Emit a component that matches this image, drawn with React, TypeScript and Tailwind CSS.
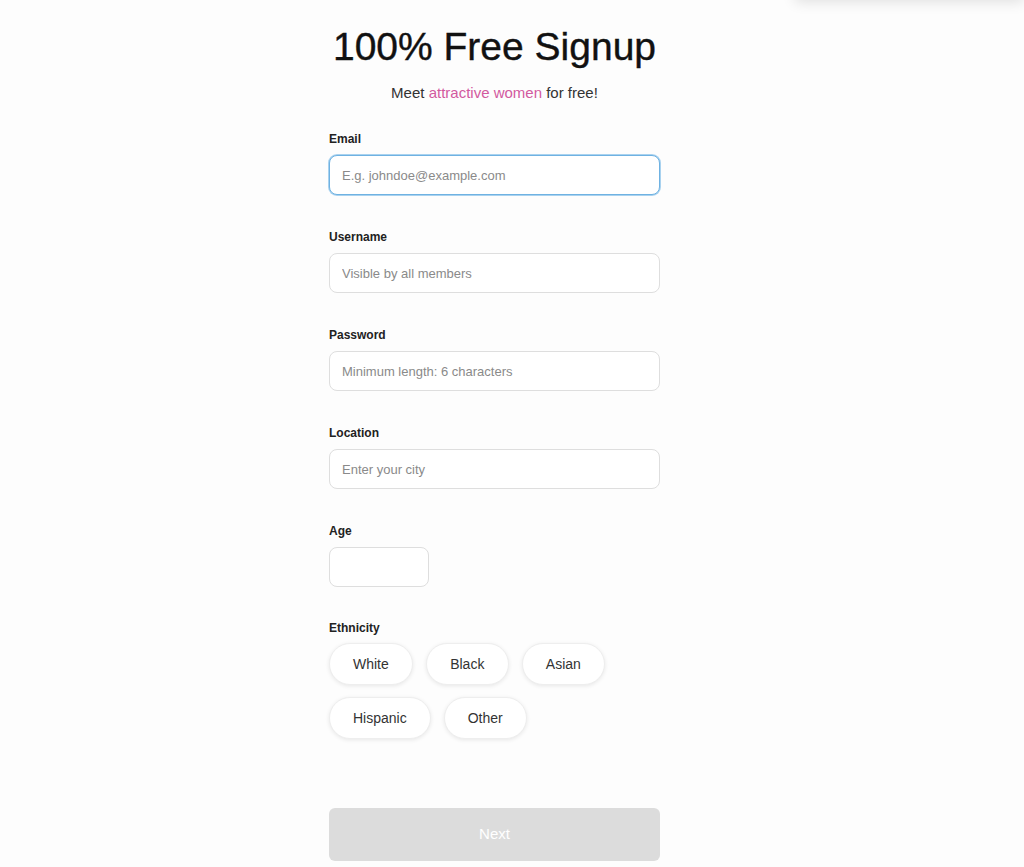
import React from 'react';

const font = { fontFamily: '"Liberation Sans", Arial, sans-serif' };

const Field: React.FC<{ label: string; placeholder?: string; focused?: boolean; narrow?: boolean }> = ({
  label,
  placeholder,
  focused,
  narrow,
}) => (
  <div className="flex flex-col">
    <label className="text-[12px] leading-4 font-bold text-[#222] mb-2">{label}</label>
    <input
      placeholder={placeholder}
      className={
        (narrow ? 'w-[100px] ' : 'w-full ') +
        (focused
          ? 'border-[#6fb2e2] shadow-[0_0_0_1px_#a9d2ef] '
          : 'border-[#dedede] ') +
        'h-10 rounded-lg border bg-white px-3 text-[13px] text-[#333] placeholder:text-[#8a8a8a] outline-none'
      }
    />
  </div>
);

const ethnicities = [['White', 'Black', 'Asian'], ['Hispanic', 'Other']];

const App: React.FC = () => {
  return (
    <div className="relative min-h-[867px] w-full bg-[#fdfdfd] overflow-hidden" style={font}>
      {/* panel edge peeking in at the top right */}
      <div className="absolute -top-5 right-0 w-[229px] h-5 bg-white shadow-[0_2px_14px_rgba(0,0,0,0.12)]" />

      <div className="w-[331px] ml-[329px] pt-6 flex flex-col">
        <h1 className="text-center text-[39px] leading-[46px] text-[#111] whitespace-nowrap -mx-10 [-webkit-text-stroke:0.4px_#111]">
          100% Free Signup
        </h1>
        <p className="mt-[13px] text-center text-[15px] leading-5 text-[#333]">
          Meet <span className="text-[#d2599f]">attractive women</span> for free!
        </p>

        <div className="mt-7 flex flex-col gap-[34px]">
          <Field label="Email" placeholder="E.g. johndoe@example.com" focused />
          <Field label="Username" placeholder="Visible by all members" />
          <Field label="Password" placeholder="Minimum length: 6 characters" />
          <Field label="Location" placeholder="Enter your city" />
          <Field label="Age" narrow />
          <div className="flex flex-col -mt-px">
            <span className="text-[12px] leading-4 font-bold text-[#222] mb-[7px]">Ethnicity</span>
            <div className="flex flex-col gap-3">
              {ethnicities.map((row, i) => (
                <div key={i} className="flex gap-[13px]">
                  {row.map((e) => (
                    <button
                      key={e}
                      className="h-[42px] px-[23px] min-w-[83px] rounded-full bg-white border border-[#eeeeee] shadow-[0_1px_4px_rgba(0,0,0,0.09)] text-[14px] text-[#333]"
                    >
                      {e}
                    </button>
                  ))}
                </div>
              ))}
            </div>
          </div>
        </div>

        <button className="mt-[69px] h-[53px] w-full rounded-md bg-[#dcdcdc] text-[15px] text-white">
          Next
        </button>
      </div>
    </div>
  );
};

export default App;
